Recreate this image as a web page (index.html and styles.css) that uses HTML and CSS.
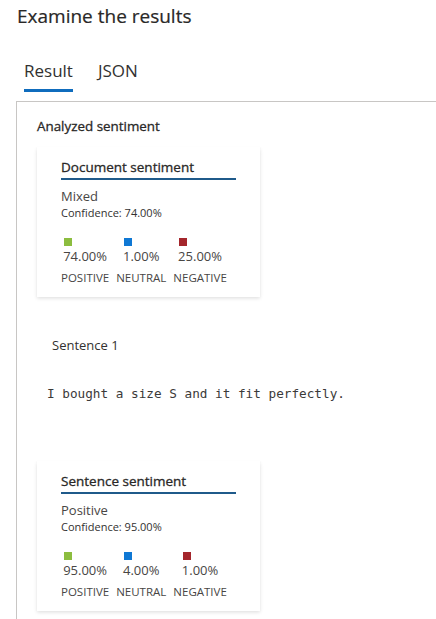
FILE: index.html
```html
<!DOCTYPE html>
<html>
<head>
<meta charset="utf-8">
<link rel="stylesheet" href="styles.css">
</head>
<body>
<div class="page">
  <h1 class="title">Examine the results</h1>
  <div class="tabs">
    <div class="tab active">Result</div>
    <div class="tab">JSON</div>
  </div>
  <div class="panel">
    <div class="section-label">Analyzed sentiment</div>
    <div class="card">
      <div class="card-title">Document sentiment</div>
      <div class="verdict">Mixed</div>
      <div class="confidence">Confidence: 74.00%</div>
      <div class="scores">
        <div class="score">
          <div class="score-top"><span class="swatch positive"></span><div class="pct">74.00%</div></div>
          <div class="label">POSITIVE</div>
        </div>
        <div class="score">
          <div class="score-top"><span class="swatch neutral"></span><div class="pct">1.00%</div></div>
          <div class="label">NEUTRAL</div>
        </div>
        <div class="score">
          <div class="score-top"><span class="swatch negative"></span><div class="pct">25.00%</div></div>
          <div class="label">NEGATIVE</div>
        </div>
      </div>
    </div>
    <div class="sentence-label">Sentence 1</div>
    <div class="sentence-text">I bought a size S and it fit perfectly.</div>
    <div class="card card-sentence">
      <div class="card-title">Sentence sentiment</div>
      <div class="verdict">Positive</div>
      <div class="confidence">Confidence: 95.00%</div>
      <div class="scores">
        <div class="score">
          <div class="score-top"><span class="swatch positive"></span><div class="pct">95.00%</div></div>
          <div class="label">POSITIVE</div>
        </div>
        <div class="score">
          <div class="score-top"><span class="swatch neutral"></span><div class="pct">4.00%</div></div>
          <div class="label">NEUTRAL</div>
        </div>
        <div class="score">
          <div class="score-top"><span class="swatch negative"></span><div class="pct">1.00%</div></div>
          <div class="label">NEGATIVE</div>
        </div>
      </div>
    </div>
  </div>
</div>
</body>
</html>
```

FILE: styles.css
```css
html, body {
  margin: 0;
  padding: 0;
  background: #ffffff;
  overflow: hidden;
}
body {
  font-family: "Open Sans", "Noto Sans", sans-serif;
  color: #323130;
}
.page {
  padding-left: 16px;
  height: 619px;
  display: flex;
  flex-direction: column;
}
.title {
  margin: 0 0 0 1px;
  padding-top: 4px;
  font-size: 19px;
  line-height: 24px;
  font-weight: 400;
  color: #292827;
  -webkit-text-stroke: 0.2px #292827;
}
.tabs {
  display: flex;
  gap: 25px;
  margin-left: 8px;
  margin-top: 32px;
}
.tab {
  font-size: 17px;
  line-height: 22px;
  color: #323130;
  padding-bottom: 7px;
  border-bottom: 3px solid transparent;
}
.tab.active {
  border-bottom-color: #0f6cbd;
}
.panel {
  margin-top: 9px;
  border-top: 1px solid #c8c6c4;
  border-left: 1px solid #c8c6c4;
  flex: 1;
  padding: 15px 0 0 20px;
  display: flex;
  flex-direction: column;
  align-items: flex-start;
}
.section-label {
  font-size: 13.4px;
  line-height: 18px;
  font-weight: 400;
  color: #292827;
  -webkit-text-stroke: 0.3px #292827;
}
.card {
  width: 175px;
  margin-top: 12px;
  padding: 11px 24px 11px 24px;
  background: #fff;
  box-shadow: 0 1.6px 3.6px rgba(0,0,0,0.13), 0 0.3px 0.9px rgba(0,0,0,0.11);
}
.card-title {
  font-size: 13.5px;
  line-height: 18px;
  font-weight: 400;
  color: #292827;
  -webkit-text-stroke: 0.3px #292827;
  padding-bottom: 2px;
  border-bottom: 2px solid #1f5a8a;
}
.verdict {
  margin-top: 7px;
  font-size: 13px;
  line-height: 18px;
  color: #484644;
}
.confidence {
  margin-top: 1px;
  font-size: 11px;
  line-height: 14px;
  color: #323130;
}
.scores {
  display: flex;
  gap: 7px;
  margin-top: 18px;
}
.score {
  display: flex;
  flex-direction: column;
  align-items: center;
}
.score-top {
  display: flex;
  flex-direction: column;
  align-items: flex-start;
}
.swatch {
  display: block;
  width: 8px;
  height: 8px;
  margin-left: 1px;
}
.swatch.positive { background: #8cbd3f; }
.swatch.neutral { background: #0f78d4; }
.swatch.negative { background: #a4262c; }
.pct {
  margin-top: 1px;
  font-size: 13px;
  line-height: 18px;
  color: #484644;
}
.label {
  margin-top: 5px;
  font-size: 11.5px;
  line-height: 16px;
  color: #484644;
}
.sentence-label {
  margin-top: 39px;
  margin-left: 15px;
  font-size: 13px;
  line-height: 18px;
  color: #323130;
}
.sentence-text {
  margin-top: 31px;
  margin-left: 10px;
  font-family: "DejaVu Sans Mono", "Liberation Mono", monospace;
  font-size: 12.7px;
  line-height: 18px;
  color: #3b3a39;
}
.card-sentence {
  margin-top: 58px;
}
```
